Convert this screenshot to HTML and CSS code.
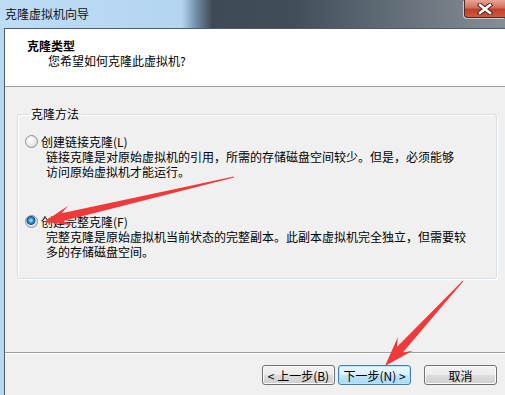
FILE: index.html
```html
<!DOCTYPE html>
<html lang="zh-CN">
<head>
  <meta charset="UTF-8">
  <title>克隆虚拟机向导</title>
  <link rel="stylesheet" href="styles.css">
</head>
<body>

  <div class="window">
    <div class="titlebar">
      <span class="title">克隆虚拟机向导</span>
      <div class="close">
        <svg width="16" height="12" viewBox="0 0 16 12">
          <path d="M3 2 L13 10 M13 2 L3 10" stroke="#4a2020" stroke-width="4.5" stroke-linecap="square"/>
          <path d="M3 2 L13 10 M13 2 L3 10" stroke="#ffffff" stroke-width="2.6" stroke-linecap="square"/>
        </svg>
      </div>
    </div>

    <div class="frame">
      <div class="client">
        <div class="header">
          <div class="h-title">克隆类型</div>
          <div class="h-sub">您希望如何克隆此虚拟机?</div>
        </div>

        <div class="body">
          <fieldset class="group">
            <legend>克隆方法</legend>

            <div class="option">
              <span class="radio"></span>
              <span class="opt-label">创建链接克隆(L)</span>
            </div>
            <p class="desc">链接克隆是对原始虚拟机的引用，所需的存储磁盘空间较少。但是，必须能够<br>访问原始虚拟机才能运行。</p>

            <div class="option second">
              <span class="radio checked"></span>
              <span class="opt-label">创建完整克隆(F)</span>
            </div>
            <p class="desc">完整克隆是原始虚拟机当前状态的完整副本。此副本虚拟机完全独立，但需要较<br>多的存储磁盘空间。</p>
          </fieldset>
        </div>

        <div class="footer">
          <button class="btn">&lt; 上一步(B)</button>
          <button class="btn default">下一步(N) &gt;</button>
          <button class="btn cancel">取消</button>
        </div>
      </div>
    </div>

    <!-- 红色标注箭头 -->
    <svg class="arrows" width="505" height="395" viewBox="0 0 505 395">
      <polygon fill="#ee3a3a" points="233.9,176.5 61.6,213.3 68.1,205.7 44,222 72.5,225.2 63.3,221.1 234.1,177.5"/>
      <polygon fill="#ee3a3a" points="462.6,280.7 396.9,347.1 397.9,337.1 385,366 412.7,350.7 402.8,352.5 463.4,281.3"/>
    </svg>
  </div>

</body>
</html>
```

FILE: styles.css
```css
body {
  margin: 0;
  font-family: "Noto Sans CJK SC", "Noto Sans", sans-serif;
  font-size: 12px;
  color: #000;
  background: #f0f0f0;
  overflow: hidden;
}

.window {
  position: relative;
  width: 505px;
  height: 395px;
  display: flex;
  flex-direction: column;
}

.titlebar {
  height: 28px;
  flex: none;
  display: flex;
  justify-content: space-between;
  background: linear-gradient(90deg, #bddcf5 0%, #b4d5f1 36%, #6e8aa3 39%, #3e4b57 42%, #414e5a 58%, #66717b 80%, #858e95 100%);
}

.title {
  padding-left: 5px;
  line-height: 27px;
  color: #111;
}

.close {
  width: 41px;
  height: 18px;
  box-sizing: border-box;
  border: 1px solid #4e2a26;
  border-top: none;
  border-right: none;
  border-radius: 0 0 0 4px;
  background: linear-gradient(#e8a493 0%, #d3705b 45%, #c1402a 55%, #cf5a3c 100%);
  display: flex;
  align-items: center;
  justify-content: center;
  box-shadow: -1px 1px 0 #c9cdd1;
}

.frame {
  flex: 1;
  display: flex;
  background: #b9d7f1;
  padding-left: 4px;
}

.client {
  flex: 1;
  display: flex;
  flex-direction: column;
  background: #f0f0f0;
  border-left: 1px solid #4a5b6b;
  border-top: 1px solid #4a5b6b;
}

.header {
  height: 58px;
  flex: none;
  background: #fff;
  border-bottom: 1px solid #a0a0a0;
  padding: 9px 0 0 22px;
  box-sizing: border-box;
  line-height: 15px;
}

.h-title {
  font-weight: bold;
}

.h-sub {
  margin-left: 21px;
}

.body {
  height: 265px;
  flex: none;
  padding: 0 8px 0 12px;
  box-sizing: border-box;
}

.group {
  margin: 20px 0 0 0;
  padding: 13px 0 19px 7px;
  border: 1px solid #d5dfe5;
  border-radius: 3px;
  box-shadow: inset 1px 1px 0 #fff, 1px 1px 0 #fff;
}

.group legend {
  margin-left: 4px;
  padding: 0 2px;
  line-height: 14px;
}

.option {
  display: flex;
  align-items: center;
  height: 15px;
}

.option.second {
  margin-top: 35px;
}

.radio {
  width: 13px;
  height: 13px;
  box-sizing: border-box;
  border-radius: 50%;
  border: 1px solid #8e8f8f;
  background: radial-gradient(circle at 40% 35%, #ffffff 0%, #f0f0f0 40%, #cfcfcf 100%);
  margin-right: 3px;
}

.radio.checked {
  background: radial-gradient(circle at 45% 40%, #c9ecff 0%, #3d9ae0 25%, #0d4f8e 45%, #e8e8e8 55%, #cfcfcf 100%);
}

.desc {
  margin: 0 0 0 21px;
  line-height: 15px;
  white-space: nowrap;
}

.footer {
  flex: 1;
  display: flex;
  justify-content: flex-end;
  align-items: flex-start;
  border-top: 1px solid #a0a0a0;
  box-shadow: inset 0 1px 0 #fff;
  padding: 12px 8px 0 0;
}

.btn {
  width: 73px;
  height: 20px;
  margin-left: 3px;
  padding: 0;
  font-family: inherit;
  font-size: 12px;
  color: #000;
  border: 1px solid #707070;
  border-radius: 3px;
  background: linear-gradient(#f3f3f3 0%, #ebebeb 50%, #dddddd 51%, #cfcfcf 100%);
  box-shadow: inset 0 0 0 1px #fbfbfb;
}

.btn.default {
  border-color: #3c7fb1;
  background: linear-gradient(#eaf6fd 0%, #d9f0fc 50%, #bee6fd 51%, #a7d9f5 100%);
  box-shadow: inset 0 0 0 1px #bfe4f8;
}

.btn.cancel {
  margin-left: 13px;
}

.arrows {
  position: absolute;
  left: 0;
  top: 0;
  pointer-events: none;
}
```
